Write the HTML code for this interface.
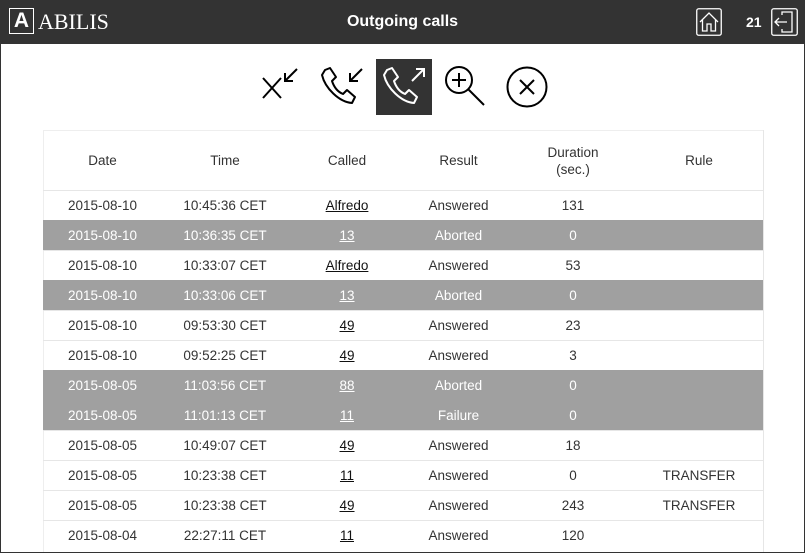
<!DOCTYPE html>
<html><head><meta charset="utf-8"><style>
*{margin:0;padding:0;box-sizing:border-box}
html,body{width:805px;height:553px;overflow:hidden;background:#fff}
body{font-family:"Liberation Sans",sans-serif;color:#333;position:relative}
.frame{position:absolute;left:0;top:0;width:805px;height:553px;border:1px solid #333;pointer-events:none}
.hdr{position:absolute;left:0;top:0;width:805px;height:44px;background:#333;color:#fff}
.logo{position:absolute;left:9px;top:8px;width:25px;height:26px;border:1.5px solid #fff;font-weight:bold;font-size:21px;text-align:center;line-height:23px}
.abilis{position:absolute;left:38px;top:9px;font-family:"Liberation Serif",serif;font-size:22px;line-height:26px}
.title{position:absolute;left:0;right:0;top:13px;text-align:center;font-size:16px;font-weight:bold}
.num{position:absolute;left:746px;top:14px;font-size:14px;font-weight:bold}
.icons svg{position:absolute}
table{position:absolute;left:44px;top:130px;width:720px;border-collapse:collapse;font-size:13.5px;table-layout:fixed}
td,th{text-align:center;font-weight:normal;height:30px;border-top:1px solid #e6e6e6;padding:0}
th{height:60px;border-top:1px solid #eee;line-height:17px}
tr.g td{background:#a0a0a0;color:#fff;border-top:1px solid #a0a0a0}
a{color:#111;text-decoration:underline}
tr.g a{color:#fff}
.tw{position:absolute;left:43px;top:130px;width:721px;height:423px;border-left:1px solid #eee;border-right:1px solid #e6e6e6}
</style></head><body>
<div class="hdr">
<div class="logo">A</div><div class="abilis">ABILIS</div>
<div class="title">Outgoing calls</div>
<svg style="position:absolute;left:696px;top:8px" width="26" height="28" viewBox="0 0 26 28"><rect x="0.75" y="0.75" width="24.5" height="26.5" rx="2" fill="none" stroke="#fff" stroke-width="1.3"/><path d="M4 14 L13 5 L22 14 M6.5 12 V23 H11 V16 H15 V23 H19.5 V12" fill="none" stroke="#fff" stroke-width="1.3"/></svg>
<div class="num">21</div>
<svg style="position:absolute;left:771px;top:8px" width="27" height="28" viewBox="0 0 27 28"><rect x="0.75" y="0.75" width="25.5" height="26.5" rx="2" fill="none" stroke="#fff" stroke-width="1.3"/><path d="M11 7 V4 H21 V24 H11 V21 M4 14 H16 M8 10 L4 14 L8 18" fill="none" stroke="#fff" stroke-width="1.3"/></svg>
</div>
<div class="icons">
<svg style="left:261px;top:66px" width="40" height="36" viewBox="0 0 40 36"><path d="M2 12 L20 32 M20 12 L2 32 M36 3 L24 15 M24 7 V15 H32" fill="none" stroke="#000" stroke-width="2"/></svg>
<svg style="left:319px;top:66px" width="46" height="40" viewBox="0 0 46 40"><path d="M6 4 L11 2 L17 11 L13 15 C15 21 19 26 24 28 L28 24 L36 31 L33 37 C20 36 6 22 3 9 Z" fill="none" stroke="#000" stroke-width="2" stroke-linejoin="round"/><path d="M43 3 L31 15 M31 7 V15 H39" fill="none" stroke="#000" stroke-width="2"/></svg>
<div style="position:absolute;left:376px;top:59px;width:56px;height:56px;background:#333"></div>
<svg style="left:381px;top:66px" width="46" height="40" viewBox="0 0 46 40"><path d="M6 4 L11 2 L17 11 L13 15 C15 21 19 26 24 28 L28 24 L36 31 L33 37 C20 36 6 22 3 9 Z" fill="none" stroke="#fff" stroke-width="2" stroke-linejoin="round"/><path d="M31 15 L43 3 M35 3 H43 V11" fill="none" stroke="#fff" stroke-width="2"/></svg>
<svg style="left:443px;top:64px" width="44" height="44" viewBox="0 0 44 44"><circle cx="16" cy="16" r="13" fill="none" stroke="#000" stroke-width="2"/><path d="M16 9 V23 M9 16 H23 M25.5 25.5 L41 41" fill="none" stroke="#000" stroke-width="2"/></svg>
<svg style="left:505px;top:65px" width="44" height="44" viewBox="0 0 44 44"><circle cx="22" cy="22" r="19.5" fill="none" stroke="#000" stroke-width="2"/><path d="M15 15 L29 29 M29 15 L15 29" fill="none" stroke="#000" stroke-width="2"/></svg>
</div>
<div class="tw"></div>
<table style="left:43px">
<colgroup><col style="width:119px"><col style="width:126px"><col style="width:118px"><col style="width:105px"><col style="width:124px"><col style="width:128px"></colgroup>
<tr><th>Date</th><th>Time</th><th>Called</th><th>Result</th><th>Duration<br>(sec.)</th><th>Rule</th></tr>
<tr><td>2015-08-10</td><td>10:45:36 CET</td><td><a>Alfredo</a></td><td>Answered</td><td>131</td><td></td></tr>
<tr class="g"><td>2015-08-10</td><td>10:36:35 CET</td><td><a>13</a></td><td>Aborted</td><td>0</td><td></td></tr>
<tr><td>2015-08-10</td><td>10:33:07 CET</td><td><a>Alfredo</a></td><td>Answered</td><td>53</td><td></td></tr>
<tr class="g"><td>2015-08-10</td><td>10:33:06 CET</td><td><a>13</a></td><td>Aborted</td><td>0</td><td></td></tr>
<tr><td>2015-08-10</td><td>09:53:30 CET</td><td><a>49</a></td><td>Answered</td><td>23</td><td></td></tr>
<tr><td>2015-08-10</td><td>09:52:25 CET</td><td><a>49</a></td><td>Answered</td><td>3</td><td></td></tr>
<tr class="g"><td>2015-08-05</td><td>11:03:56 CET</td><td><a>88</a></td><td>Aborted</td><td>0</td><td></td></tr>
<tr class="g"><td>2015-08-05</td><td>11:01:13 CET</td><td><a>11</a></td><td>Failure</td><td>0</td><td></td></tr>
<tr><td>2015-08-05</td><td>10:49:07 CET</td><td><a>49</a></td><td>Answered</td><td>18</td><td></td></tr>
<tr><td>2015-08-05</td><td>10:23:38 CET</td><td><a>11</a></td><td>Answered</td><td>0</td><td>TRANSFER</td></tr>
<tr><td>2015-08-05</td><td>10:23:38 CET</td><td><a>49</a></td><td>Answered</td><td>243</td><td>TRANSFER</td></tr>
<tr><td>2015-08-04</td><td>22:27:11 CET</td><td><a>11</a></td><td>Answered</td><td>120</td><td></td></tr>
</table>
<div class="frame"></div>
</body></html>
